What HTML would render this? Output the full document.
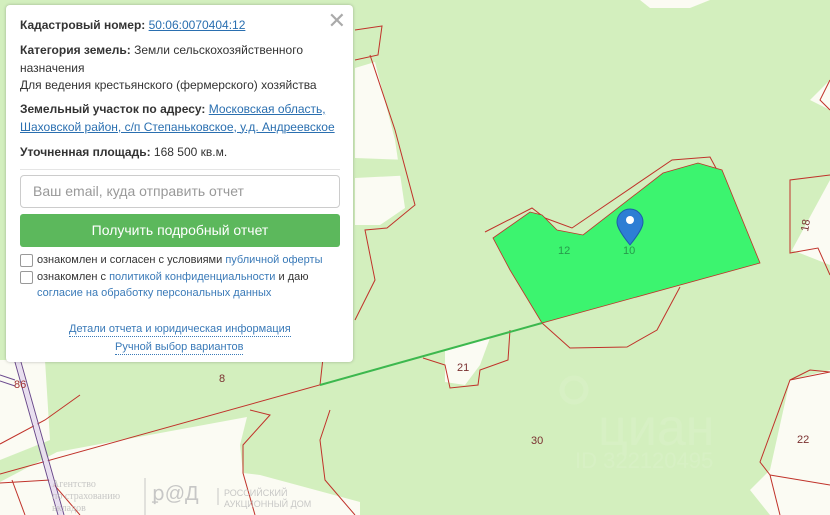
<!DOCTYPE html>
<html><head><meta charset="utf-8"><style>
body{margin:0;width:830px;height:515px;overflow:hidden;font-family:"Liberation Sans",Arial,sans-serif;position:relative;background:#d3efbe}
svg{position:absolute;left:0;top:0}
.panel{position:absolute;left:6px;top:5px;width:347px;height:357px;background:#fff;border-radius:4px;box-shadow:0 0 3px rgba(0,0,0,.25);font-size:12px;color:#333}
.panel p{margin:0;position:absolute;left:14px;line-height:17.5px}
b{font-weight:bold}
a{color:#2a6fb0;text-decoration:underline}
.close{position:absolute;right:7px;top:3px;font-size:22px;color:#aaa;font-weight:300}
.inp{position:absolute;left:14px;top:170px;width:318px;height:31px;border:1px solid #ccc;border-radius:4px;color:#999;font-size:14px;line-height:31px;text-indent:12px}
.btn{position:absolute;left:14px;top:209px;width:320px;height:33px;background:#5cb85c;border-radius:3px;color:#fff;font-size:14px;line-height:33px;text-align:center}
.cb{position:absolute;width:11px;height:11px;border:1px solid #999;border-radius:2px;left:14px}
.sm{font-size:11px;color:#333;position:absolute;left:31px;line-height:16px}
.sm span,.lk{color:#3a7ab8}
.lk{position:absolute;font-size:11px;border-bottom:1px dotted #3a7ab8;line-height:13px}
</style></head><body>
<svg width="830" height="515" viewBox="0 0 830 515">
<g fill="#fbfbf3">
<path d="M355 68 L375 62 L395 140 L405 208 L380 225 L355 225 Z"/>
<path d="M355 158 L410 160 L415 175 L355 178 Z" fill="#d3efbe"/>
<path d="M640 0 L710 0 L690 8 L650 8 Z"/>
<path d="M445 350 L490 338 L480 365 L465 385 L445 382 Z"/>
<path d="M830 80 L810 100 L830 110 Z"/>
<path d="M830 180 L792 250 L830 265 Z"/>
<path d="M830 370 L790 380 L770 470 L750 490 L770 515 L830 515 Z"/>
<path d="M0 360 L45 360 L50 440 L0 460 Z"/>
<path d="M57 452 L247 417 L240 445 L243 473 L260 475 L360 502 L360 515 L0 515 L0 482 Z"/>
</g>
<g fill="none" stroke="#c0322a" stroke-width="1">
<path d="M485 232 L532 208 L545 218 L572 228 L672 160 L710 157 L717 170"/>
<path d="M542 323 L570 348 L627 347 L657 330 L680 287"/>
<path d="M542 323 L0 474"/>
<path d="M355 30 L382 26 L378 55 L355 60"/>
<path d="M370 55 L395 130 L415 205 L387 228 L365 230 L375 280 L355 320"/>
<path d="M510 330 L508 360 L480 370 L478 385 L450 388 L445 365 L423 358"/>
<path d="M830 80 L820 100 L830 110"/>
<path d="M830 175 L790 180 L790 253 L818 248 L830 275"/>
<path d="M830 372 L815 375 L790 380 L760 462 L770 475 L780 515"/>
<path d="M770 475 L830 485"/>
<path d="M790 380 L810 370 L830 372"/>
<path d="M320 385 L325 340 L340 320"/>
<path d="M250 410 L270 415 L243 445 L243 473 L255 515"/>
<path d="M80 515 L50 480 L0 483"/>
<path d="M12 480 L25 515"/>
<path d="M330 410 L320 440 L325 480 L355 515"/>
<path d="M0 444 L45 420 L80 395"/>
</g>
<path d="M493 238 L530 212 L542 215 L557 230 L583 235 L663 173 L698 163 L722 170 L760 263 L542 323 L510 270 Z" fill="#3cf46f" stroke="#c0322a" stroke-width="0.8"/>
<path d="M542 323 L320 385" stroke="#3cb84e" stroke-width="2"/>
<g stroke="#6b4a8e" stroke-width="1" fill="none">
<path d="M13 355 L58 515 M19 355 L64 515"/>
<path d="M0 375 L15 380 M0 381 L15 386"/>
</g>
<path d="M16 355 L61 515" stroke="#e8def0" stroke-width="4"/>
<g font-family="Liberation Sans,sans-serif" font-size="11">
<text x="558" y="254" fill="#279a4c">12</text>
<text x="623" y="254" fill="#279a4c">10</text>
<text x="457" y="371" fill="#7a3030">21</text>
<text x="531" y="444" fill="#7a3030">30</text>
<text x="797" y="443" fill="#7a3030">22</text>
<text x="219" y="382" fill="#7a3030">8</text>
<text x="14" y="388" fill="#a03030">86</text>
<text x="808" y="232" fill="#7a3030" transform="rotate(-80 808 232)">18</text>
</g>
<g opacity="0.09" fill="#fff" font-family="Liberation Sans,sans-serif">
<text x="598" y="445" font-size="52">циан</text>
<text x="575" y="468" font-size="22">ID 322120495</text>
<circle cx="574" cy="390" r="12" fill="none" stroke="#fff" stroke-width="5"/>
</g>
<g fill="#bbb" opacity="0.8" font-family="Liberation Serif,serif" font-size="10">
<text x="52" y="487">Агентство</text><text x="52" y="499">по страхованию</text><text x="52" y="511">вкладов</text>
<text x="152" y="500" font-size="20" font-family="Liberation Sans">ꝑ@Д</text>
<text x="224" y="496" font-family="Liberation Sans" font-size="9">РОССИЙСКИЙ</text>
<text x="224" y="507" font-family="Liberation Sans" font-size="9">АУКЦИОННЫЙ ДОМ</text>
<path d="M145 478 V515 M218 488 V505" stroke="#bbb"/>
</g>
<path d="M630 245 C618 230 617 225 617 222 A13 13 0 0 1 643 222 C643 225 642 230 630 245 Z" fill="#2d7ed4" stroke="#1d5ea8"/>
<circle cx="630" cy="220" r="4" fill="#fff"/>
</svg>
<div class="panel">
<span class="close">✕</span>
<p style="top:12px"><b>Кадастровый номер:</b> <a>50:06:0070404:12</a></p>
<p style="top:37px"><b>Категория земель:</b> Земли сельскохозяйственного<br>назначения<br>Для ведения крестьянского (фермерского) хозяйства</p>
<p style="top:96px"><b>Земельный участок по адресу:</b> <a>Московская область,</a><br><a>Шаховской район, с/п Степаньковское, у.д. Андреевское</a></p>
<p style="top:139px"><b>Уточненная площадь:</b> 168 500 кв.м.</p>
<div style="position:absolute;left:14px;top:164px;width:320px;border-top:1px solid #e5e5e5"></div>
<div class="inp">Ваш email, куда отправить отчет</div>
<div class="btn">Получить подробный отчет</div>
<div class="cb" style="top:249px"></div>
<div class="sm" style="top:247px">ознакомлен и согласен с условиями <span>публичной оферты</span></div>
<div class="cb" style="top:266px"></div>
<div class="sm" style="top:264px">ознакомлен с <span>политикой конфиденциальности</span> и даю<br><span>согласие на обработку персональных данных</span></div>
<div class="lk" style="left:63px;top:318px">Детали отчета и юридическая информация</div>
<div class="lk" style="left:109px;top:336px">Ручной выбор вариантов</div>
</div>
</body></html>
